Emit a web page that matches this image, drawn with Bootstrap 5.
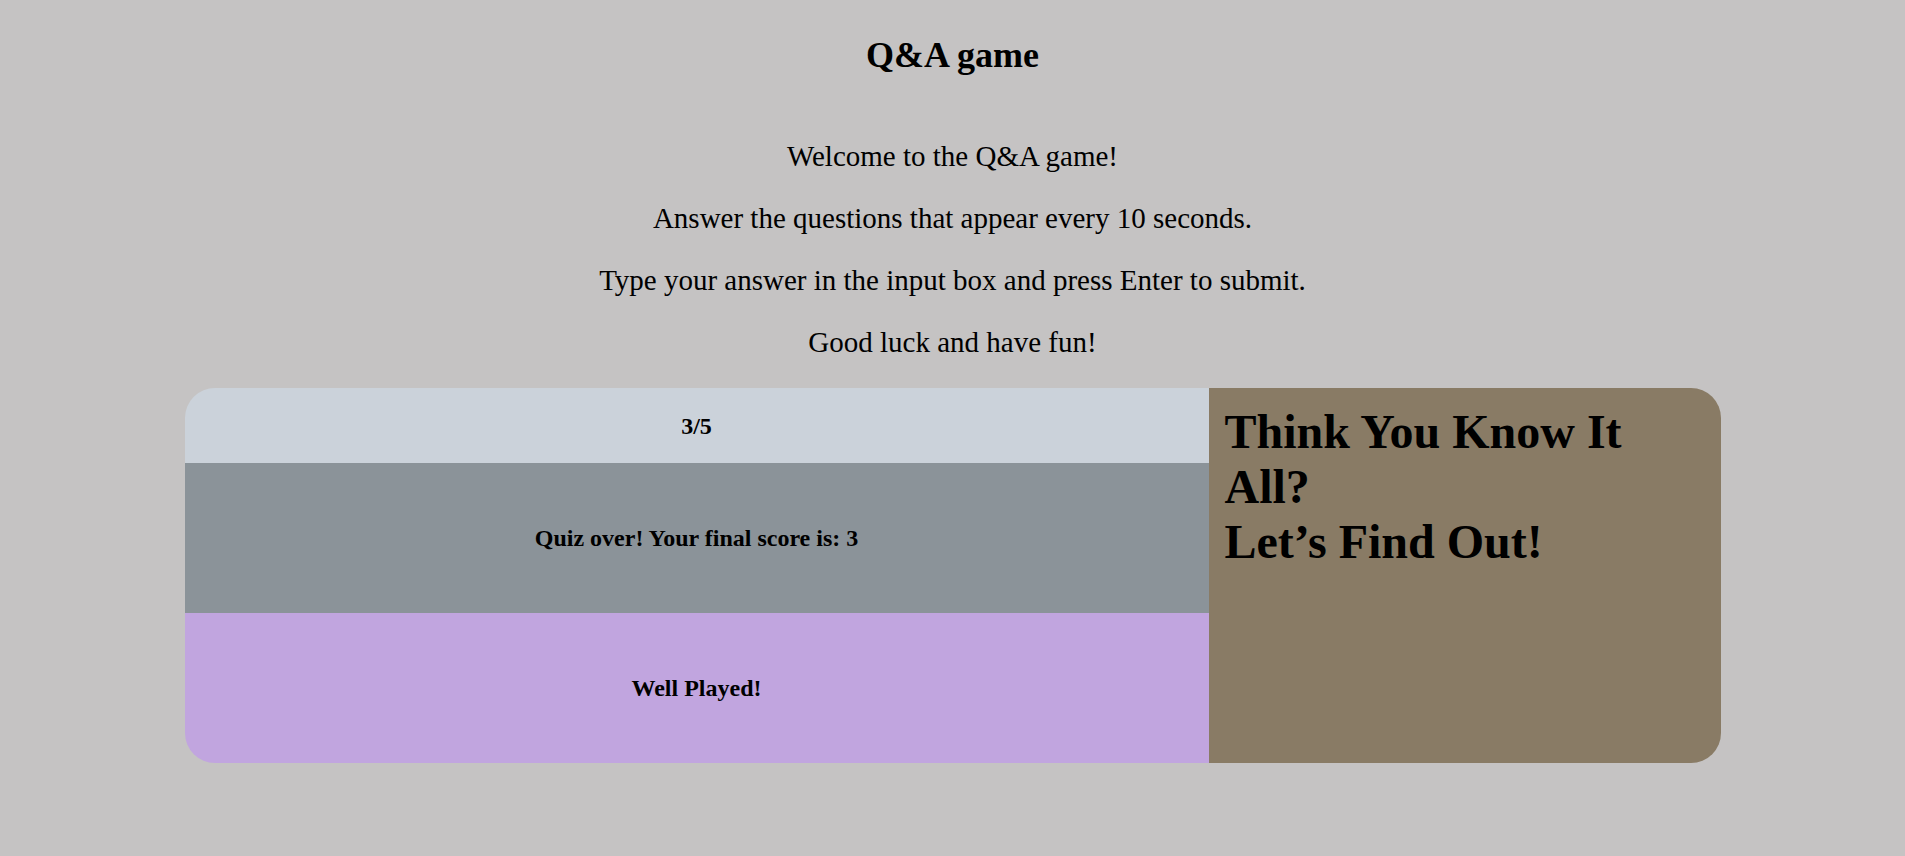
<!DOCTYPE html>
<html lang="en">
<head>
<meta charset="utf-8">
<meta name="viewport" content="width=device-width, initial-scale=1">
<title>Q&amp;A game</title>
<link href="https://cdn.jsdelivr.net/npm/bootstrap@5.3.0/dist/css/bootstrap.min.css" rel="stylesheet">
<style>
body { background: #c5c3c3; color: #000; font-family: "Liberation Serif", serif; }
.game-title { font-size: 36px; line-height: 42px; font-weight: 700; padding-top: 34px; margin-bottom: 64px; }
.intro p { font-size: 29px; line-height: 33px; margin-bottom: 29px; }
.board { width: calc(100% - 369px); border-radius: 30px; min-height: 375px; }
.side-col { background: #897b65; padding: 16px; }
.side-col h2 { font-size: 48px; line-height: 55px; font-weight: 700; }
.panel { font-size: 24px; font-weight: 700; }
.score { flex: 1 1 0; background: #cbd2da; }
.question { flex: 2 1 0; background: #8b9399; }
.verdict { flex: 2 1 0; background: #c1a5df; }
</style>
</head>
<body>
<header class="text-center">
  <h1 class="game-title">Q&amp;A game</h1>
  <div class="intro">
    <p>Welcome to the Q&amp;A game!</p>
    <p>Answer the questions that appear every 10 seconds.</p>
    <p>Type your answer in the input box and press Enter to submit.</p>
    <p>Good luck and have fun!</p>
  </div>
</header>
<main class="board row g-0 mx-auto overflow-hidden">
  <section class="col-8 d-flex flex-column">
    <div class="panel score d-flex align-items-center justify-content-center">3/5</div>
    <div class="panel question d-flex align-items-center justify-content-center">Quiz over! Your final score is: 3</div>
    <div class="panel verdict d-flex align-items-center justify-content-center">Well Played!</div>
  </section>
  <aside class="side-col col-4">
    <h2 class="mb-0">Think You Know It All?<br>Let’s Find Out!</h2>
  </aside>
</main>
<script src="https://cdn.jsdelivr.net/npm/bootstrap@5.3.0/dist/js/bootstrap.bundle.min.js"></script>
</body>
</html>
